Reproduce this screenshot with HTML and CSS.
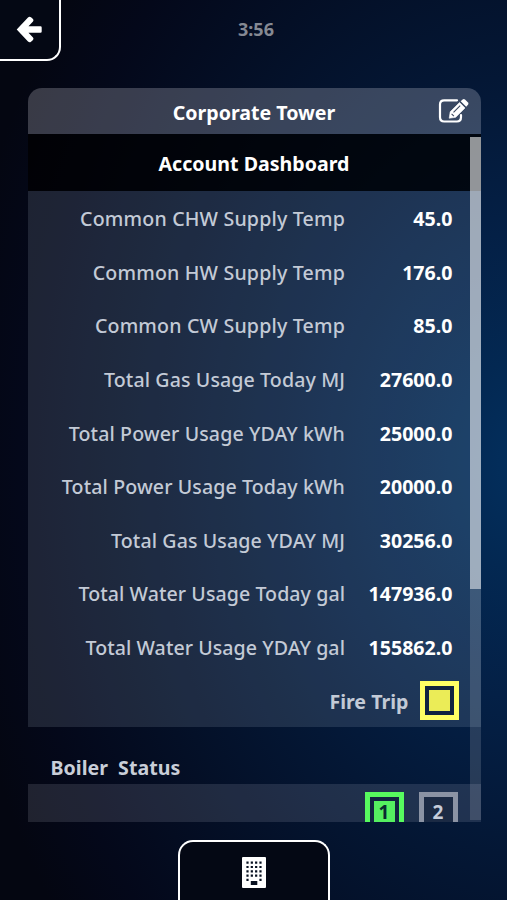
FILE: index.html
```html
<!DOCTYPE html>
<html lang="en">
<head>
<meta charset="utf-8">
<title>Corporate Tower</title>
<link rel="stylesheet" href="styles.css">
</head>
<body>
<div class="app">
  <header class="topbar">
    <button class="back" aria-label="Back">
      <svg width="30" height="30" viewBox="14 14 30 30"><path d="M16.700 29.500L28 17.400Q29.500 16 31 17.200L33 19Q34 20.200 33 21.500L28.500 26.300H40.500Q41.700 26.300 41.700 27.500V31.500Q41.700 32.700 40.500 32.700H28.500L33 37.500Q34 38.800 33 40L31 41.800Q29.500 43 28 41.600Z" fill="#fff"/></svg>
    </button>
    <div class="clock">3:56</div>
  </header>
  <main class="panel">
    <div class="panel-head">
      <h1>Corporate Tower</h1>
      <svg class="edit" width="31" height="26" viewBox="0 0 31 26">
        <path d="M19 2.300H6.200Q2 2.300 2 6.500V19.300Q2 23.500 6.200 23.500H18.800Q23 23.500 23 19.300V17" fill="none" stroke="#fff" stroke-width="2.200" stroke-linecap="round"/>
        <path d="M11.200 20.200L12.200 13.800L21.500 4.500L27 10L17.700 19.300Z" fill="#fff" stroke="#fff" stroke-width=".6" stroke-linejoin="round"/>
        <path d="M15.500 14.300L22.200 7.600M13.600 15.800l2.300 2.300" fill="none" stroke="#3c475e" stroke-width="1.100"/>
        <path d="M22.700 3.300L24.600 1.400Q25.800.400 27 1.400L30 4.400Q31 5.600 30 6.800L28.200 8.800Z" fill="#fff"/>
      </svg>
    </div>
    <div class="scroller">
      <div class="content">
        <h2>Account Dashboard</h2>
        <div class="readings">
          <div class="row temp"><span>Common CHW Supply Temp</span><b>45.0</b></div>
          <div class="row temp"><span>Common HW Supply Temp</span><b>176.0</b></div>
          <div class="row temp"><span>Common CW Supply Temp</span><b>85.0</b></div>
          <div class="row"><span>Total Gas Usage Today MJ</span><b>27600.0</b></div>
          <div class="row"><span>Total Power Usage YDAY kWh</span><b>25000.0</b></div>
          <div class="row"><span>Total Power Usage Today kWh</span><b>20000.0</b></div>
          <div class="row"><span>Total Gas Usage YDAY MJ</span><b>30256.0</b></div>
          <div class="row water"><span>Total Water Usage Today gal</span><b>147936.0</b></div>
          <div class="row water"><span>Total Water Usage YDAY gal</span><b>155862.0</b></div>
          <div class="row trip"><span>Fire Trip</span><i class="lamp yellow"><em></em></i></div>
        </div>
        <h3>Boiler&nbsp; Status</h3>
        <div class="units">
          <i class="lamp green"><em>1</em></i>
          <i class="lamp off"><em>2</em></i>
        </div>
      </div>
      <div class="track"><div class="thumb"></div></div>
    </div>
  </main>
  <footer>
    <button class="building" aria-label="Building">
      <svg width="24" height="31" viewBox="0 0 24 31"><rect width="24" height="31" rx="1" fill="#fff"/><g stroke="#071020" stroke-width="2.200" stroke-dasharray="2.200 2.130"><path d="M4.400 5.700h15.400M4.400 10h15.400M4.400 14.300h15.400M4.400 18.600h15.400"/></g><path d="M4.400 21.800h2.200v2.200H4.400zM17.400 21.800h2.200v2.200h-2.200zM8.800 24h6.500v4H8.800z" fill="#071020"/></svg>
    </button>
  </footer>
</div>
</body>
</html>
```
FILE: styles.css
```css
* { box-sizing: border-box; }
body { margin: 0; font-family: "Noto Sans", "Open Sans", sans-serif; }
.app {
  width: 507px;
  height: 900px;
  overflow: hidden;
  display: flex;
  flex-direction: column;
  background: radial-gradient(ellipse 580px 780px at 530px 465px, #03305f 0%, #032852 14%, #042046 30%, #041735 50%, #040f26 70%, #04081a 88%, #040611 100%);
}
.topbar, .panel, footer { flex: none; }
button { padding: 0; margin: 0; background: #040814; border: 3px solid #fff; display: flex; }
.topbar { height: 88px; display: grid; grid-template-columns: 61px 1fr 56px; align-items: start; }
.back { width: 61px; height: 61px; border-width: 0 2.500px 2.500px 0; border-radius: 0 0 14px 0; padding: 14px 0 0 14px; }
.clock { text-align: center; font-size: 18px; font-weight: 700; line-height: 24px; padding-top: 17px; color: #858993; }
.panel { width: 453px; margin-left: 27.500px; height: 734px; display: flex; flex-direction: column; }
.panel-head { height: 46px; flex: none; border-radius: 14px 14px 0 0; background: rgba(245, 248, 255, .22); display: grid; grid-template-columns: 42px 1fr 42px; align-items: center; }
h1, h2, h3 { margin: 0; font-size: 19.600px; color: #fff; font-weight: 700; }
h1 { grid-column: 2; text-align: center; line-height: 28px; padding-top: 3px; }
.edit { margin-left: -1px; }
.scroller { height: 688px; display: grid; grid-template-columns: 1fr 11px; overflow: hidden; }
.scroller > * { grid-row: 1; }
.content { grid-column: 1 / 3; grid-row: 1; height: 688px; overflow: hidden; }
h2 { height: 57px; line-height: 60px; background: rgba(0, 0, 0, .72); text-align: center; }
.readings { height: 536px; background: rgba(225, 236, 255, .12); display: grid; grid-auto-rows: 53.600px; }
.row { display: grid; grid-template-columns: 317.500px 107.500px; align-items: center; font-size: 19.600px; padding-top: 2px; text-align: right; color: #c3cad6; font-weight: 500; }
.row span { letter-spacing: .1px; }
.row.temp span { letter-spacing: .17px; }
.row.water span { letter-spacing: .06px; }
.row b { color: #fff; font-weight: 700; }
.row.trip { display: flex; justify-content: flex-end; font-weight: 700; gap: 11px; padding: 0 22px 0 0; }
.row.trip span { padding-top: 2px; letter-spacing: 0; }
h3 { height: 57px; line-height: 82px; padding-left: 23px; color: #c9ced8; }
.units { height: 60px; background: rgba(235, 242, 255, .12); display: flex; justify-content: flex-end; gap: 15px; padding: 8px 23px 0 0; }
.lamp { width: 39px; height: 39px; border: 5px solid; padding: 4px; background: #122440; display: block; font-style: normal; }
.lamp em { display: block; height: 21px; line-height: 23px; text-align: center; font-style: normal; font-size: 19px; font-weight: 700; }
.yellow { border-color: #ffff64; }
.yellow em { background: #ebec57; }
.green { border-color: #57fa5e; }
.green em { background: #55ef60; color: #0a2830; }
.off { border-color: #8b93a4; background: #1b2a44; }
.off em { color: #c5ccda; }
.track { grid-column: 2; margin-top: 2.500px; height: 683px; background: rgba(255, 255, 255, .14); }
.thumb { height: 452.500px; background: rgba(255, 255, 255, .5); }
footer { margin-top: 18px; display: flex; justify-content: center; }
.building { width: 152px; height: 70px; border-width: 2.500px; border-bottom: 0; border-radius: 15px 15px 0 0; justify-content: center; padding-top: 15px; }
```
